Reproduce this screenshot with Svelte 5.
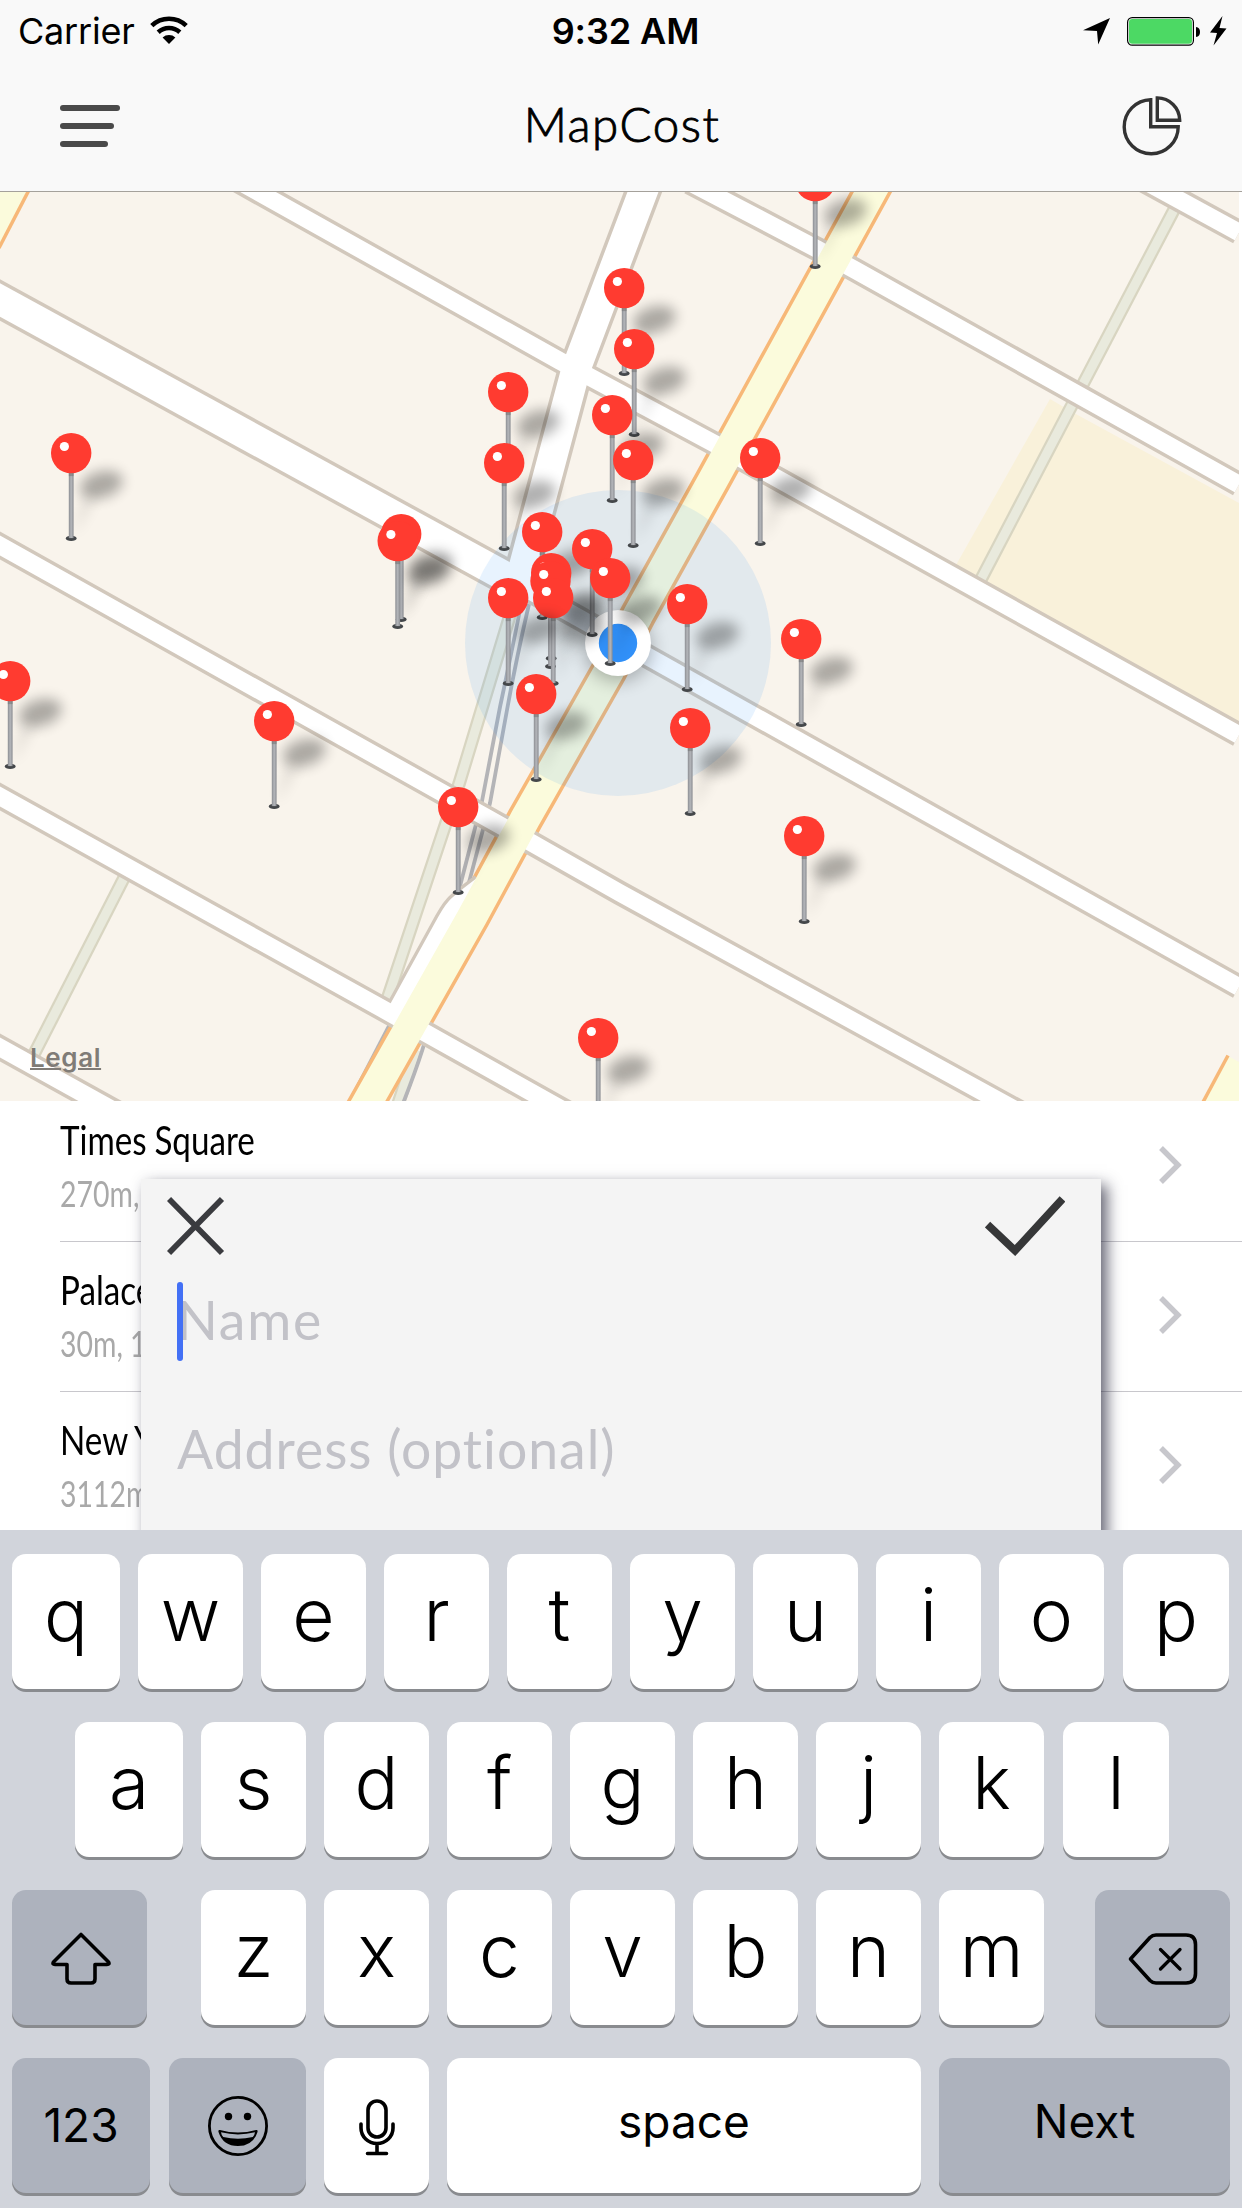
<script>
  // Map pins, by the centre of the pin head, back to front.
  const pins = [
    [815, 181], [624, 288], [634, 349], [508, 392], [612, 415], [71, 453],
    [760, 458], [633, 460], [504, 463], [542, 532], [401, 534], [397.5, 541],
    [592, 549], [551, 573], [550.3, 581], [553, 598], [610, 578], [508, 598],
    [687, 604], [801, 639], [10, 681], [536, 694], [274, 721], [690, 728],
    [458, 807], [804, 836], [598, 1038]
  ];

  const streets = [
    'M180 148 L258 192 L560 361 L715 444 L1239 735',
    'M520 585 L1239 987',
    'M-10 540 L507 829 L620 893 L1021 1113',
    'M-10 791 L390 1013 L570 1114',
    'M-10 1042 L120 1114',
    'M690 182.500 L817 249 L856 270.500 L1239 484.500',
    'M1140 178.500 L1239 232.500'
  ];
  const wide = 'M-10 294.500 L518 583.500';
  const broad = 'M649 176 L576 369 L519 583';
  const ramp = 'M484 888 C456 909 456 909 445 930 L401 1010';
  const avenue = 'M882 172 L713 480 L638 615 L609 671 L525 819 L472 917 L359 1117';
  const paths = [
    'M511 612 L459 784 L385 1006',
    'M416 1050 L396 1110',
    'M126 874 L31 1060',
    'M1177 204 L978 585'
  ];
  const rails = [
    'M520 610 Q510 660 500 707 L482 801 L459 890',
    'M529 604 Q516 660 507 710 L490 803 L467 890',
    'M432 1012 Q428 1040 402 1106',
    'M392 1020 L347.500 1106'
  ];

  const places = [
    { name: 'Times Square', detail: '270m,' },
    { name: 'Palace', detail: '30m, 1' },
    { name: 'New Y', detail: '3112m' }
  ];
  const row1 = [...'qwertyuiop'];
  const row2 = [...'asdfghjkl'];
  const row3 = [...'zxcvbnm'];
</script>

<div class="screen">
  <header>
    <div class="status">
      <div class="left">
        <span>Carrier</span>
        <svg width="38" height="28" viewBox="0 0 38 28">
          <g fill="none" stroke="#000" stroke-width="4.600">
            <path d="M1.800 9.600 A25 25 0 0 1 36.200 9.600" />
            <path d="M8.200 16.200 A16 16 0 0 1 29.800 16.200" />
          </g>
          <path d="M12.600 21.400 A9.500 9.500 0 0 1 25.400 21.400 L19 28 Z" />
        </svg>
      </div>
      <div class="time">9:32 AM</div>
      <div class="right">
        <svg width="27" height="27" viewBox="0 0 27 27"><path d="M0 12.200 L27 0 L15.200 26.500 L14 13 Z" /></svg>
        <svg class="battery" width="74" height="29" viewBox="0 0 74 29">
          <rect x=".6" y=".6" width="65.800" height="27.600" rx="4.600" fill="#fff" stroke="#000" stroke-width="1.200" />
          <rect x="2" y="2" width="63" height="24.800" rx="3.200" fill="#4cd964" />
          <path d="M69 10 Q73 10.500 73 15 Q73 19.500 69 20 Z" />
        </svg>
        <svg class="bolt" width="17" height="30" viewBox="0 0 17 30"><path d="M12.500 0 L0 16.500 L7 17 L3.500 29.500 L16.500 12.500 L9.500 12 Z" /></svg>
      </div>
    </div>
    <div class="nav">
      <div class="menu"><i></i><i></i><i></i></div>
      <h1>MapCost</h1>
      <svg class="pie" width="60" height="60" viewBox="0 0 60 60" fill="none" stroke="#333" stroke-width="3.400">
        <path d="M28.700 3.700 V30.700 H56.200 A27 27 0 1 1 28.700 3.700 Z" />
        <path d="M35.300 1.900 V24.200 H57.700 A22.400 22.400 0 0 0 35.300 1.900 Z" />
      </svg>
    </div>
  </header>

  <section class="map">
    <svg width="1239" height="909" viewBox="0 192 1239 909">
      <defs>
        <filter id="soft" x="-60%" y="-80%" width="220%" height="260%"><feGaussianBlur stdDeviation="6.500" /></filter>
        <filter id="halo" x="-50%" y="-50%" width="200%" height="200%"><feGaussianBlur stdDeviation="9" /></filter>
        <linearGradient id="needle"><stop offset="0" stop-color="#8b8d92" /><stop offset=".5" stop-color="#b4b6ba" /><stop offset="1" stop-color="#8b8d92" /></linearGradient>
        <g id="pin">
          <ellipse cx="30" cy="31.500" rx="22" ry="13" transform="rotate(-16 30 31.500)" fill="#000" opacity=".31" filter="url(#soft)" />
          <path d="M2 84 L12 46 L26 40 Z" fill="#000" opacity=".11" filter="url(#soft)" />
          <ellipse cx="0" cy="85.300" rx="5.400" ry="2.600" fill="#44474a" />
          <rect x="-2.400" y="18" width="4.800" height="67" fill="url(#needle)" />
          <rect x="-2.400" y="18" width="4.800" height="5" fill="#777" opacity=".6" />
          <circle r="20.200" fill="#ff3b30" />
          <circle cx="-6.800" cy="-6.600" r="4.600" fill="#fff" />
        </g>
      </defs>

      <path d="M1050 399 L956 565 L1108 650 L1239 722 V503 L1074 413 Z" fill="#f9f1da" />
      {#each paths as d}
        <path {d} class="line" stroke="#d8d5c1" stroke-width="13.500" />
        <path {d} class="line" stroke="#e9eadd" stroke-width="9" />
      {/each}
      {#each rails as d}
        <path {d} class="line" stroke="#b4b4b7" stroke-width="3.800" />
      {/each}

      <path d={avenue} class="line" stroke="#f7b878" stroke-width="37" />
      {#each streets as d}<path {d} class="line casing" stroke-width="24.500" />{/each}
      <path d={ramp} class="line casing" stroke-width="31" />
      <path d={wide} class="line casing" stroke-width="36.500" />
      <path d={broad} class="line casing" stroke-width="36" />
      {#each streets as d}<path {d} class="line fill" stroke-width="17.500" />{/each}
      <path d={ramp} class="line fill" stroke-width="24.500" />
      <path d={wide} class="line fill" stroke-width="29.500" />
      <path d={broad} class="line fill" stroke-width="29" />
      <path d={avenue} class="line" stroke="#fbfbdc" stroke-width="30" />

      <path d="M0 192 H28 L0 246.500 Z" fill="#fbfbdc" />
      <path d="M29 190 L-1 248" stroke="#f7b878" stroke-width="3.500" />
      <path d="M1228 1056 L1239 1062 V1101 H1202 Z" fill="#fbfbdc" />
      <path d="M1228 1055.500 L1202 1104" stroke="#f7b878" stroke-width="3.500" />

      <circle cx="618" cy="643" r="153" fill="rgba(25,140,245,.1)" />
      <circle cx="618" cy="647" r="34" fill="#000" opacity=".28" filter="url(#halo)" />
      <circle cx="618" cy="643" r="33" fill="#fff" />
      <circle cx="618" cy="643" r="19.200" fill="#3190f8" />

      {#each pins as [x, y]}
        <use href="#pin" x={x + 0.2} y={y + 0.1} />
      {/each}
    </svg>
    <span class="legal">Legal</span>
  </section>

  <section class="places">
    <ul>
      {#each places as place}
        <li>
          <div>
            <p class="name">{place.name}</p>
            <p class="detail">{place.detail}</p>
          </div>
          <svg width="26" height="40" viewBox="0 0 26 40"><path d="M3 3 L20 20 L3 37" fill="none" stroke="#c7c7cc" stroke-width="5.400" /></svg>
        </li>
      {/each}
    </ul>
    <div class="card">
      <div class="actions">
        <svg width="58" height="60" viewBox="0 0 58 60"><path d="M2 3 L55 57 M55 3 L2 57" stroke="#3a3b3f" stroke-width="5.800" /></svg>
        <svg width="80" height="60" viewBox="0 0 80 60"><path d="M2.500 28.500 L30 54.500 L77.500 3" fill="none" stroke="#363738" stroke-width="7.800" /></svg>
      </div>
      <div class="field name-field"><i class="caret"></i><span>Name</span></div>
      <div class="field address-field"><span>Address (optional)</span></div>
    </div>
  </section>

  <section class="keyboard">
    <div class="keys">
      {#each row1 as k}<div class="key">{k}</div>{/each}
    </div>
    <div class="keys second">
      {#each row2 as k}<div class="key">{k}</div>{/each}
    </div>
    <div class="keys third">
      <div class="key dark shift">
        <svg width="62" height="54" viewBox="0 0 62 54" fill="none" stroke="#000" stroke-width="3.600" stroke-linejoin="round">
          <path d="M31 2.500 L3.500 30 Q2 32.500 5 32.500 H17 V47 Q17 51 21 51 H41 Q45 51 45 47 V32.500 H57 Q60 32.500 58.500 30 Z" />
        </svg>
      </div>
      <div class="letters">
        {#each row3 as k}<div class="key">{k}</div>{/each}
      </div>
      <div class="key dark delete">
        <svg width="70" height="52" viewBox="0 0 70 52" fill="none" stroke="#000" stroke-width="3.600" stroke-linejoin="round" stroke-linecap="round">
          <path d="M2.500 26 L22 4.500 Q24.500 2 28 2 H58 Q67.500 2 67.500 11.500 V40.500 Q67.500 50 58 50 H28 Q24.500 50 22 47.500 Z" />
          <path d="M32.500 16.500 L52 36 M52 16.500 L32.500 36" stroke-width="3.300" />
        </svg>
      </div>
    </div>
    <div class="keys fourth">
      <div class="key dark num">123</div>
      <div class="key dark emoji">
        <svg width="62" height="62" viewBox="0 0 62 62">
          <circle cx="31" cy="31" r="28.600" fill="none" stroke="#000" stroke-width="2.800" />
          <circle cx="21.500" cy="21.500" r="3.700" /><circle cx="40.500" cy="21.500" r="3.700" />
          <path d="M13 35 Q31 40 49 35 Q51 34.500 50.500 37 Q46 51 31 51 Q16 51 11.500 37 Q11 34.500 13 35 Z" />
          <path d="M14 37.300 Q31 41.500 48 37.300 Q47.600 40.300 45.800 42 Q31 45.600 16.200 42 Q14.400 40.300 14 37.300 Z" fill="#abb2bd" />
        </svg>
      </div>
      <div class="key mic">
        <svg width="36" height="57" viewBox="0 0 36 57" fill="none" stroke="#000" stroke-width="3.600" stroke-linecap="round">
          <rect x="9" y="2" width="18" height="36" rx="9" />
          <path d="M2 25 V29 A16 15.500 0 0 0 34 29 V25 M18 45 V54 M8.500 54.500 H27.500" />
        </svg>
      </div>
      <div class="key space">space</div>
      <div class="key dark next">Next</div>
    </div>
  </section>
</div>

<style>
  :global(body) { margin: 0; background: #fff; }
  .screen {
    width: 1242px; height: 2208px; display: flex; flex-direction: column; overflow: hidden;
    font-family: Inter, "Liberation Sans", sans-serif; color: #000; background: #fff;
  }
  svg { display: block; flex: none; }
  header { height: 191px; border-bottom: 1px solid #a5a19b; background: #f9f9f9; flex: none; }
  .status {
    height: 62px; display: grid; grid-template-columns: 1fr auto 1fr; align-items: center;
    padding: 0 15px 0 18px; font-size: 36px; line-height: 62px;
  }
  .left, .right { display: flex; align-items: center; }
  .left { gap: 15px; letter-spacing: -.2px; }
  .left svg { margin-bottom: 3px; }
  .right { justify-content: flex-end; }
  .battery { margin-left: 17px; }
  .bolt { margin-left: 9px; }
  .time { font-weight: 600; font-size: 36px; letter-spacing: -.1px; padding-left: 6px; }
  .nav { height: 129px; display: flex; justify-content: space-between; padding: 0 60px; }
  .menu { display: flex; flex-direction: column; gap: 12px; padding-top: 43px; width: 60px; }
  .menu i { height: 6px; border-radius: 3px; background: #4a4a4a; }
  .menu i:nth-child(2) { width: 54px; }
  .menu i:nth-child(3) { width: 48px; }
  h1 { margin: 0; font: 300 47.500px/124px Lato, sans-serif; letter-spacing: 1.500px; -webkit-text-stroke: .9px #000; padding-left: 2px; }
  .pie { margin-top: 34px; }

  .map { position: relative; height: 909px; background: #fff; flex: none; }
  .map > svg { background: #f9f4ec; }
  .line { fill: none; }
  .casing { stroke: #d2c8bc; }
  .fill { stroke: #fff; }
  .legal {
    position: absolute; left: 30px; bottom: 27px; font-size: 26px; line-height: 32px; font-weight: 600;
    letter-spacing: .6px; color: #807c77; text-decoration: underline; text-decoration-thickness: 2px;
  }

  .places { position: relative; height: 429px; overflow: hidden; flex: none; }
  ul { list-style: none; margin: -9px 0 0; padding: 0 0 0 60px; }
  li {
    height: 149px; border-bottom: 1px solid #c8c7cc; display: flex; justify-content: space-between;
    align-items: center; padding-right: 58px; font-family: Lato, sans-serif;
  }
  li > svg { margin-bottom: 3px; }
  li p { margin: 0; white-space: nowrap; transform-origin: 0 50%; }
  .name { font-size: 41px; line-height: 52px; transform: scaleX(.81); word-spacing: -1px; }
  .detail { font-size: 36px; line-height: 52px; color: #a9a9a9; transform: scaleX(.79); padding-top: 1px; }
  .card {
    position: absolute; left: 141px; top: 78px; width: 960px; height: 500px; background: #f4f4f4;
    box-shadow: 6px 6px 14px rgba(30, 30, 50, .68);
  }
  .actions { display: flex; justify-content: space-between; padding: 17px 36px 0 26px; }
  .field {
    display: flex; align-items: center; padding-left: 36px; height: 80px;
    font-family: Lato, sans-serif; font-size: 53.500px; letter-spacing: 1px; color: #c2c2c8;
  }
  .field span { margin-top: -5px; }
  .name-field { margin-top: 25px; }
  .name-field span { letter-spacing: 1.800px; }
  .address-field { margin-top: 49px; }
  .caret { width: 6px; height: 79px; border-radius: 3px; background: #4370f5; margin-right: -6px; z-index: 1; }

  .keyboard {
    flex: 1; background: #d1d4db; padding: 24px 12px 0; display: flex; flex-direction: column; gap: 33px;
  }
  .keys, .letters { display: flex; gap: 18px; }
  .key {
    box-sizing: border-box; width: 105px; height: 135px; border-radius: 14px; background: #fff;
    box-shadow: 0 3px 0 #898b8f; display: flex; align-items: center; justify-content: center;
    font-size: 73px; font-weight: 360; line-height: 100px; padding-bottom: 14px; flex: none;
  }
  .key:first-child { width: 108px; }
  .letters .key:first-child { width: 105px; }
  .keys > .key:last-child { width: 106px; margin-left: 1px; }
  .second { padding-left: 63px; }
  .third { justify-content: space-between; }
  .letters { margin-left: 36px; }
  .dark { background: #adb2bd; }
  .keys > .key.shift, .keys > .key.delete { width: 135px; padding: 2px 0 0 3px; }
  .third > .key.delete { margin: 0 0 0 33px; padding-left: 1px; }
  .fourth .key { font-size: 46px; font-weight: 400; padding-bottom: 8px; }
  .keys > .key.num { width: 138px; padding-bottom: 2px; }
  .keys > .key.emoji { width: 137px; padding: 0; margin-left: 1px; }
  .fourth > .key.mic { padding: 3px 0 0; }
  .keys > .key.space { width: 474px; padding-bottom: 10px; }
  .keys > .key.next { width: 291px; margin: 0; padding-bottom: 10px; }
</style>
